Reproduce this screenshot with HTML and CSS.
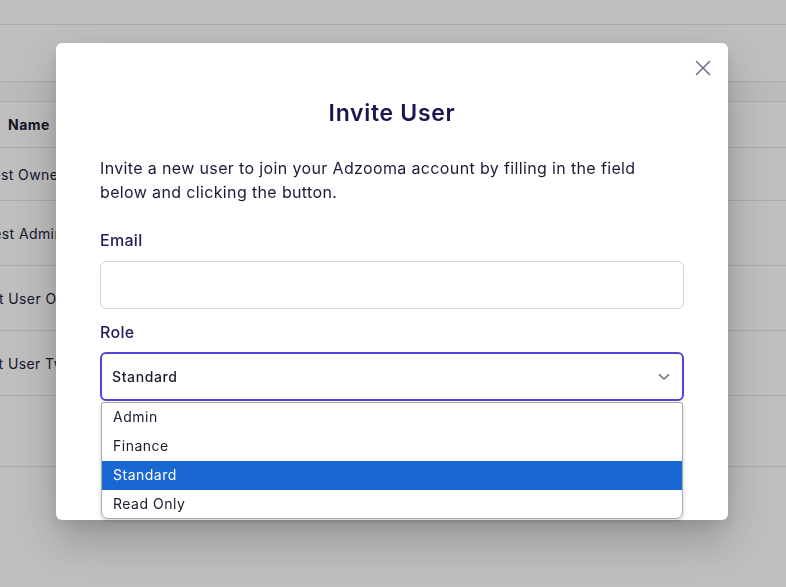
FILE: index.html
```html
<!DOCTYPE html>
<html lang="en">
<head>
<meta charset="utf-8">
<title>Invite User</title>
<link rel="stylesheet" href="styles.css">
</head>
<body>
<div class="page">
  <div class="topbar"></div>
  <div class="toolbar"></div>
  <div class="band"></div>
  <div class="table">
    <div class="row head"><div class="cell">Name</div></div>
    <div class="row r1"><div class="cell">Test Owner</div></div>
    <div class="row r2"><div class="cell">Test Admin</div></div>
    <div class="row r2"><div class="cell">Test User One</div></div>
    <div class="row r2"><div class="cell">Test User Two</div></div>
    <div class="row r3"><div class="cell"></div></div>
  </div>
</div>
<div class="overlay"></div>
<div class="modal">
  <button class="close" aria-label="Close">
    <svg width="16" height="16" viewBox="0 0 16 16"><path d="M1.5 1.5 L14.5 14.5 M14.5 1.5 L1.5 14.5" stroke="#70708a" stroke-width="1.6" stroke-linecap="round" fill="none"/></svg>
  </button>
  <h1 class="title">Invite User</h1>
  <p class="intro">Invite a new user to join your Adzooma account by filling in the field below and clicking the button.</p>
  <label class="label label-email">Email</label>
  <div class="input"></div>
  <label class="label label-role">Role</label>
  <div class="select-wrap">
    <div class="select">
      <span>Standard</span>
      <svg class="chev" width="12" height="8" viewBox="0 0 12 8"><path d="M1.5 1.8 L6 6 L10.5 1.8" stroke="#6b6f7b" stroke-width="1.6" fill="none" stroke-linecap="round" stroke-linejoin="round"/></svg>
    </div>
    <ul class="menu">
      <li>Admin</li>
      <li>Finance</li>
      <li class="sel">Standard</li>
      <li>Read Only</li>
    </ul>
  </div>
</div>
</body>
</html>
```
FILE: styles.css
```css
* { box-sizing: border-box; }
html, body { margin: 0; padding: 0; }
body {
  width: 786px;
  height: 587px;
  overflow: hidden;
  background: #fff;
  font-family: "Inter", "Open Sans", sans-serif;
  color: #1c1b3a;
}
.page { width: 786px; }
.topbar { height: 25px; border-bottom: 1px solid #e3e4e8; }
.toolbar { height: 57px; border-bottom: 1px solid #e3e4e8; }
.band { height: 20px; border-bottom: 1px solid #e3e4e8; background: #fafafa; }
.table { margin-left: -72px; width: 858px; }
.row { display: flex; align-items: center; border-bottom: 1px solid #e3e4e8; }
.row.head { height: 46px; }
.row.r1 { height: 53px; }
.row.r2 { height: 65px; }
.row.r3 { height: 71px; }
.cell { width: 192px; text-align: center; font-size: 14px; letter-spacing: 0.4px; color: #22223a; white-space: nowrap; }
.head .cell { font-weight: 700; font-size: 14px; letter-spacing: 0.5px; color: #1a1a33; padding-left: 10px; }
.overlay { position: fixed; inset: 0; background: rgba(0,0,0,0.25); }
.modal {
  position: absolute;
  left: 56px; top: 43px;
  width: 672px; height: 477px;
  background: #fff;
  border-radius: 6px;
  padding: 54px 44px 0 44px;
  box-shadow: 0 20px 45px rgba(0,0,0,0.22), 0 6px 14px rgba(0,0,0,0.08);
}
.close {
  position: absolute; right: 17px; top: 17px;
  width: 16px; height: 16px; padding: 0; border: 0; background: none;
  display: flex;
}
.title {
  margin: 0;
  text-align: center;
  font-size: 23px; line-height: 32px; font-weight: 600;
  letter-spacing: 0.7px;
  color: #1e1452;
}
.intro {
  margin: 27px 0 0 0;
  font-size: 16px; line-height: 24px;
  letter-spacing: 0.36px;
  color: #1d1a38;
  padding-right: 30px;
}
.label {
  display: block;
  font-size: 16px; line-height: 24px; font-weight: 500;
  letter-spacing: 0.3px;
  color: #261b58;
}
.label-email { margin-top: 24px; }
.input {
  margin-top: 9px;
  height: 48px;
  border: 1px solid #d4d4dc;
  border-radius: 6px;
}
.label-role { margin-top: 11px; }
.select-wrap { position: relative; margin-top: 8px; }
.select {
  height: 49px;
  border: 2px solid #4f45dc;
  border-radius: 6px;
  display: flex; align-items: center; justify-content: space-between;
  padding: 0 12px 0 10px;
  font-size: 14px; font-weight: 500; letter-spacing: 0.6px; color: #1c1b2e;
}
.chev { margin-top: 1px; }
.menu {
  position: absolute;
  left: 1px; right: 1px; top: 50px;
  margin: 0; padding: 0; list-style: none;
  background: #fff;
  border: 1px solid #a9a9b0;
  border-radius: 2px 2px 7px 7px;
  box-shadow: 0 2px 4px rgba(0,0,0,0.18);
  overflow: hidden;
}
.menu li {
  height: 29px; line-height: 27px;
  padding-left: 11px;
  font-size: 14px; letter-spacing: 0.5px; color: #1c1b2e;
}
.menu li.sel { background: #1967d2; color: #fff; }
.menu li:last-child { height: 28px; }
```
